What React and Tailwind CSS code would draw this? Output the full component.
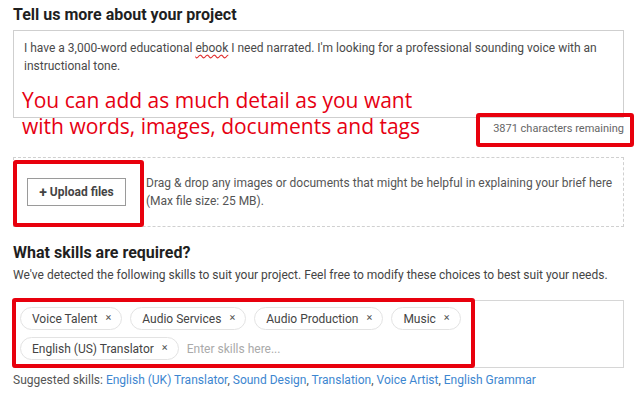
import React from 'react';

const SKILLS = ['Voice Talent', 'Audio Services', 'Audio Production', 'Music', 'English (US) Translator'];
const SUGGESTED = ['English (UK) Translator', 'Sound Design', 'Translation', 'Voice Artist', 'English Grammar'];

function Chip({ label }) {
  return (
    <span className="inline-flex items-center h-[23px] pl-[11px] pr-[10px] rounded-full border border-[#e3e3e3] text-[12px] text-[#444]">
      {label}
      <span className="ml-[8px] text-[11px] text-[#555]">×</span>
    </span>
  );
}

export default function App() {
  return (
    <div className="relative w-[637px] h-[396px] bg-white px-[13px] font-['Roboto',sans-serif] overflow-hidden">
      {/* Project description */}
      <h2 className="pt-[5px] text-[16px] leading-5 font-bold text-[#1f1f1f]">Tell us more about your project</h2>
      <div className="mt-[5px] h-[88px] border border-[#cfcfcf] pl-[10px] pr-[10px] pt-[8px] text-[12px] leading-[18px] text-[#4a4a4a] whitespace-nowrap">
        I have a 3,000-word educational{' '}
        <span className="underline decoration-wavy decoration-[#e03030] underline-offset-2">ebook</span> I need narrated. I'm
        looking for a professional sounding voice with an
        <br />
        instructional tone.
      </div>
      <div className="h-[22px] flex items-center justify-end text-[11px] text-[#666]">3871 characters remaining</div>

      {/* Upload */}
      <div className="mt-[17px] h-[70px] border border-dashed border-[#d0d0d0] flex items-center pl-[13px]">
        <button className="w-[99px] h-[28px] border border-[#9a9a9a] text-[12px] font-bold text-[#444] flex items-center justify-center gap-[3px]">
          <span className="text-[14px] leading-none">+</span>Upload files
        </button>
        <p className="ml-[20px] text-[12px] leading-[18px] text-[#555]">
          Drag &amp; drop any images or documents that might be helpful in explaining your brief here
          <br />
          (Max file size: 25 MB).
        </p>
      </div>

      {/* Skills */}
      <h2 className="mt-[16px] text-[16px] leading-5 font-bold text-[#1f1f1f]">What skills are required?</h2>
      <p className="mt-[3px] text-[12px] leading-[18px] text-[#444]">
        We've detected the following skills to suit your project. Feel free to modify these choices to best suit your needs.
      </p>
      <div className="mt-[16px] h-[68px] border border-[#d6d6d6] pl-[6px] pt-[6px] flex flex-col gap-[7px]">
        <div className="flex gap-[8px]">
          {SKILLS.slice(0, 4).map((s) => (
            <Chip key={s} label={s} />
          ))}
        </div>
        <div className="flex items-center gap-[8px]">
          <Chip label={SKILLS[4]} />
          <span className="text-[12px] text-[#aaa]">Enter skills here...</span>
        </div>
      </div>
      <p className="mt-[3px] text-[12px] leading-[18px] text-[#555]">
        Suggested skills:{' '}
        {SUGGESTED.map((s, i) => (
          <span key={s}>
            <span className="text-[#3d86d0]">{s}</span>
            {i < SUGGESTED.length - 1 ? ', ' : ''}
          </span>
        ))}
      </p>

      {/* Annotations */}
      <div className="absolute left-[22px] top-[87px] text-[21px] leading-[26px] text-[#e60012] font-['Open_Sans',sans-serif]">
        You can add as much detail as you want
        <br />
        with words, images, documents and tags
      </div>
      <div className="absolute left-[476px] top-[113px] w-[158px] h-[34px] border-4 border-[#e8000d] rounded-[3px]" />
      <div className="absolute left-[13px] top-[160px] w-[131px] h-[67px] border-4 border-[#e8000d] rounded-[3px]" />
      <div className="absolute left-[12px] top-[298px] w-[463px] h-[70px] border-4 border-[#e8000d] rounded-[3px]" />
    </div>
  );
}
